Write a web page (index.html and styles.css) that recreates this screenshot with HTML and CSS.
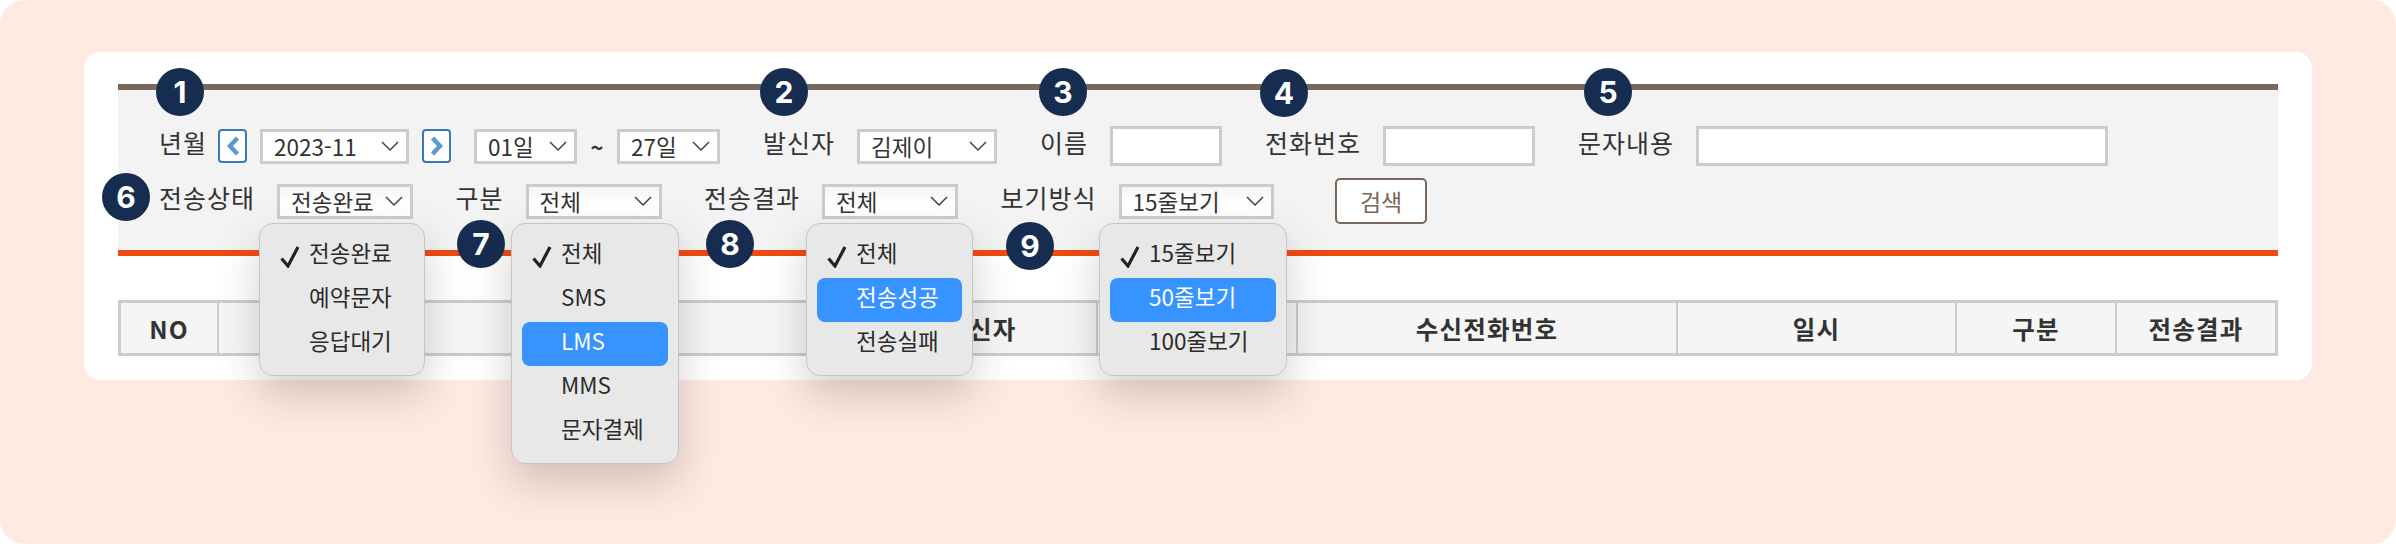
FILE: index.html
```html
<!DOCTYPE html>
<html lang="ko">
<head>
  <meta charset="UTF-8">
  <title>문자 발송 내역 검색</title>
  <link rel="stylesheet" href="styles.css">
</head>
<body>
  <div class="page">
    <div class="card">
      <div class="search-panel">
        <div class="search-row">
          <div class="field">
            <span class="label">년월</span>
            <div class="month-nav">
              <button class="nav-btn"><svg width="14" height="20" viewBox="0 0 14 20"><path d="M11.5 2 4 10l7.5 8" fill="none" stroke="#5b9ad2" stroke-width="4.5"/></svg></button>
              <div class="select w-year"><span>2023-11</span><svg class="chev" width="18" height="10" viewBox="0 0 18 10"><path d="M1 1l8 8 8-8" fill="none" stroke="#444" stroke-width="1.5"/></svg></div>
              <button class="nav-btn"><svg width="14" height="20" viewBox="0 0 14 20"><path d="M2.5 2l7.5 8-7.5 8" fill="none" stroke="#5b9ad2" stroke-width="4.5"/></svg></button>
            </div>
            <div class="day-range">
              <div class="select w-day"><span>01일</span><svg class="chev" width="18" height="10" viewBox="0 0 18 10"><path d="M1 1l8 8 8-8" fill="none" stroke="#444" stroke-width="1.5"/></svg></div>
              <span class="tilde">~</span>
              <div class="select w-day"><span>27일</span><svg class="chev" width="18" height="10" viewBox="0 0 18 10"><path d="M1 1l8 8 8-8" fill="none" stroke="#444" stroke-width="1.5"/></svg></div>
            </div>
          </div>
          <div class="field">
            <span class="label">발신자</span>
            <div class="select w-sender"><span>김제이</span><svg class="chev" width="18" height="10" viewBox="0 0 18 10"><path d="M1 1l8 8 8-8" fill="none" stroke="#444" stroke-width="1.5"/></svg></div>
          </div>
          <div class="field">
            <span class="label">이름</span>
            <input class="text-input w-name" type="text">
          </div>
          <div class="field">
            <span class="label">전화번호</span>
            <input class="text-input w-phone" type="text">
          </div>
          <div class="field">
            <span class="label">문자내용</span>
            <input class="text-input w-message" type="text">
          </div>
        </div>
        <div class="search-row row-second">
          <div class="field">
            <span class="label">전송상태</span>
            <div class="select w-type"><span>전송완료</span><svg class="chev" width="18" height="10" viewBox="0 0 18 10"><path d="M1 1l8 8 8-8" fill="none" stroke="#444" stroke-width="1.5"/></svg></div>
          </div>
          <div class="field">
            <span class="label">구분</span>
            <div class="select w-type"><span>전체</span><svg class="chev" width="18" height="10" viewBox="0 0 18 10"><path d="M1 1l8 8 8-8" fill="none" stroke="#444" stroke-width="1.5"/></svg></div>
          </div>
          <div class="field">
            <span class="label">전송결과</span>
            <div class="select w-type"><span>전체</span><svg class="chev" width="18" height="10" viewBox="0 0 18 10"><path d="M1 1l8 8 8-8" fill="none" stroke="#444" stroke-width="1.5"/></svg></div>
          </div>
          <div class="field">
            <span class="label">보기방식</span>
            <div class="select w-view"><span>15줄보기</span><svg class="chev" width="18" height="10" viewBox="0 0 18 10"><path d="M1 1l8 8 8-8" fill="none" stroke="#444" stroke-width="1.5"/></svg></div>
          </div>
          <button class="search-btn">검색</button>
        </div>
      </div>

      <table class="result-table">
        <tr>
          <th class="col-no">NO</th>
          <th class="col-content">내용</th>
          <th class="col-sender">발신자</th>
          <th class="col-name">수신자</th>
          <th class="col-phone">수신전화번호</th>
          <th class="col-date">일시</th>
          <th class="col-kind">구분</th>
          <th class="col-result">전송결과</th>
        </tr>
      </table>
    </div>

    <!-- numbered callouts -->
    <span class="badge b1">1</span>
    <span class="badge b2">2</span>
    <span class="badge b3">3</span>
    <span class="badge b4">4</span>
    <span class="badge b5">5</span>
    <span class="badge b6">6</span>
    <span class="badge b7">7</span>
    <span class="badge b8">8</span>
    <span class="badge b9">9</span>

    <!-- opened select menus -->
    <ul class="menu m6">
      <li><svg class="check" width="20" height="22" viewBox="0 0 20 22"><path d="M1.5 12.5l6.5 7.5L18 1" fill="none" stroke="#222" stroke-width="3.2"/></svg>전송완료</li>
      <li>예약문자</li>
      <li>응답대기</li>
    </ul>
    <ul class="menu m7">
      <li><svg class="check" width="20" height="22" viewBox="0 0 20 22"><path d="M1.5 12.5l6.5 7.5L18 1" fill="none" stroke="#222" stroke-width="3.2"/></svg>전체</li>
      <li>SMS</li>
      <li class="active">LMS</li>
      <li>MMS</li>
      <li>문자결제</li>
    </ul>
    <ul class="menu m8">
      <li><svg class="check" width="20" height="22" viewBox="0 0 20 22"><path d="M1.5 12.5l6.5 7.5L18 1" fill="none" stroke="#222" stroke-width="3.2"/></svg>전체</li>
      <li class="active">전송성공</li>
      <li>전송실패</li>
    </ul>
    <ul class="menu m9">
      <li><svg class="check" width="20" height="22" viewBox="0 0 20 22"><path d="M1.5 12.5l6.5 7.5L18 1" fill="none" stroke="#222" stroke-width="3.2"/></svg>15줄보기</li>
      <li class="active">50줄보기</li>
      <li>100줄보기</li>
    </ul>
  </div>
</body>
</html>
```

FILE: styles.css
```css
/* General Styling */
* {
  box-sizing: border-box;
}

body {
  margin: 0;
  background: #fff;
  font-family: 'Noto Sans CJK KR', 'Noto Sans', sans-serif;
  color: #333;
}

.page {
  position: relative;
  width: 2396px;
  height: 544px;
  padding: 52px 84px;
  background: #fee9e3;
  border-radius: 24px;
  overflow: hidden;
}

.card {
  height: 328px;
  padding: 32px 34px;
  background: #fff;
  border-radius: 16px;
}

/* Search Panel */
.search-panel {
  height: 172px;
  padding: 36px 0 0 41px;
  background: #f3f3f3;
  border-top: 6px solid #78675a;
  border-bottom: 6px solid #ee4a12;
}

.search-row {
  display: flex;
  align-items: center;
  gap: 43px;
  height: 40px;
}

.row-second {
  gap: 42.5px;
  margin-top: 12px;
  height: 46px;
}

.field {
  display: flex;
  align-items: center;
  gap: 22px;
}

.label {
  margin-top: -9px;
  font-size: 25px;
  line-height: 28px;
  letter-spacing: 1px;
  white-space: nowrap;
}

.month-nav {
  display: flex;
  align-items: center;
  gap: 13px;
  margin-left: -11px;
}

.day-range {
  display: flex;
  align-items: center;
  margin-left: 1px;
}

.tilde {
  width: 40px;
  text-align: center;
  font-size: 22px;
  font-weight: 700;
}

.nav-btn {
  display: flex;
  align-items: center;
  justify-content: center;
  width: 29px;
  height: 34px;
  padding: 0;
  background: #fff;
  border: 2px solid #3a78b8;
  border-radius: 4px;
}

.select {
  display: flex;
  align-items: center;
  justify-content: space-between;
  height: 35px;
  padding: 0 7px 0 11px;
  background: #fff;
  border: 3px solid #ccc;
  font-size: 22.5px;
  color: #333;
  white-space: nowrap;
}

.row-second .select {
  background: linear-gradient(#f4f4f4, #fff 60%);
}

.w-year { width: 149px; }
.w-day { width: 103px; }
.w-sender { width: 140px; }
.w-type { width: 136px; }
.w-view { width: 155px; }

.text-input {
  height: 40px;
  background: #fff;
  border: 3px solid #ccc;
}

.w-name { width: 112px; }
.w-phone { width: 152px; }
.w-message { width: 412px; }

.search-btn {
  width: 92px;
  height: 46px;
  margin-left: 19px;
  padding: 0;
  background: #fff;
  border: 2px solid #78675a;
  border-radius: 5px;
  font-family: inherit;
  font-size: 23px;
  color: #78675a;
}

/* Result Table */
.result-table {
  width: 2160px;
  height: 56px;
  margin-top: 44px;
  border-collapse: separate;
  border-spacing: 0;
  table-layout: fixed;
  border: 3px solid #ccc;
}

.result-table th {
  padding: 0;
  background: #f5f5f5;
  border-right: 2px solid #ccc;
  font-size: 24.5px;
  font-weight: 700;
  letter-spacing: 1.2px;
  color: #333;
}

.result-table th:last-child {
  border-right: 0;
}

.col-no { width: 98px; }
.col-content { width: 647px; }
.col-sender { width: 232px; }
.col-name { width: 200px; }
.col-phone { width: 380px; }
.col-date { width: 279px; }
.col-kind { width: 160px; }
.col-result { width: 158px; }

/* Number Callouts */
.badge {
  position: absolute;
  display: flex;
  align-items: center;
  justify-content: center;
  width: 48px;
  height: 48px;
  background: #162c50;
  border-radius: 50%;
  font-family: 'Inter', sans-serif;
  font-size: 30px;
  font-weight: 700;
  color: #fff;
}

.b1 { left: 156px; top: 68px; }
.b2 { left: 760px; top: 68px; }
.b3 { left: 1039px; top: 68px; }
.b4 { left: 1260px; top: 69px; }
.b5 { left: 1584px; top: 68px; }
.b6 { left: 102px; top: 173px; }
.b7 { left: 457px; top: 220px; }
.b8 { left: 706px; top: 220px; }
.b9 { left: 1006px; top: 222px; }

/* Opened Menus */
.menu {
  position: absolute;
  top: 223px;
  margin: 0;
  padding: 10px 10px 9px;
  list-style: none;
  background: #e8e8e8;
  border: 1px solid #c6c6c6;
  border-radius: 14px;
  box-shadow: 0 18px 40px rgba(60, 40, 30, 0.22);
}

.m6 { left: 259px; width: 166px; }
.m7 { left: 511px; width: 168px; }
.m8 { left: 806px; width: 167px; }
.m9 { left: 1099px; width: 188px; }

.menu li {
  position: relative;
  height: 44px;
  padding-left: 39px;
  border-radius: 8px;
  font-size: 22.5px;
  line-height: 36px;
  color: #2b2b2b;
  white-space: nowrap;
}

.menu .check {
  position: absolute;
  left: 10px;
  top: 12px;
}

.menu li.active {
  background: #3793ff;
  color: #fff;
}
```
